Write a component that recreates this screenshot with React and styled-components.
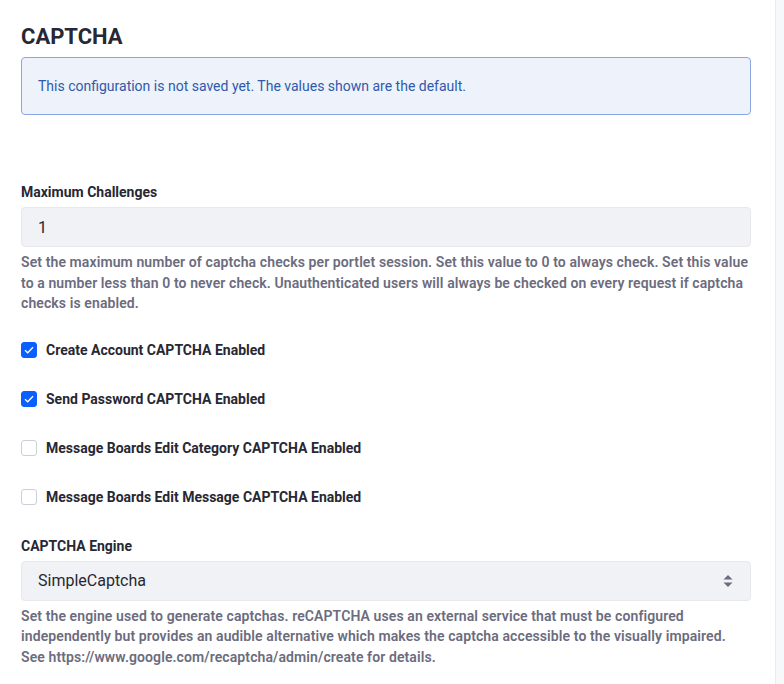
import React from "react";
import styled, { createGlobalStyle } from "styled-components";

const GlobalStyle = createGlobalStyle`
  body {
    margin: 0;
    background: #ffffff;
    font-family: Roboto, "Liberation Sans", sans-serif;
  }
  * {
    box-sizing: border-box;
  }
`;

const checkboxes = [
  { label: "Create Account CAPTCHA Enabled", checked: true },
  { label: "Send Password CAPTCHA Enabled", checked: true },
  { label: "Message Boards Edit Category CAPTCHA Enabled", checked: false },
  { label: "Message Boards Edit Message CAPTCHA Enabled", checked: false },
];

export default function App() {
  return (
    <>
      <GlobalStyle />
      <Page>
        <Main>
          <Title>CAPTCHA</Title>
          <Alert>This configuration is not saved yet. The values shown are the default.</Alert>

          <FormGroup style={{ marginTop: 67 }}>
            <Label>Maximum Challenges</Label>
            <Input>1</Input>
            <HelpText>
              Set the maximum number of captcha checks per portlet session. Set this value to 0 to
              always check. Set this value to a number less than 0 to never check. Unauthenticated
              users will always be checked on every request if captcha checks is enabled.
            </HelpText>
          </FormGroup>

          <CheckList>
            {checkboxes.map((item) => (
              <CheckRow key={item.label}>
                <CheckBox checked={item.checked}>
                  {item.checked && (
                    <svg width="10" height="8" viewBox="0 0 10 8">
                      <path d="M1 4.2 L3.7 6.8 L9 1.2" fill="none" stroke="#fff" strokeWidth="1.3" />
                    </svg>
                  )}
                </CheckBox>
                <CheckLabel>{item.label}</CheckLabel>
              </CheckRow>
            ))}
          </CheckList>

          <FormGroup style={{ marginTop: 28 }}>
            <Label>CAPTCHA Engine</Label>
            <Input>
              SimpleCaptcha
              <Arrows width="10" height="14" viewBox="0 0 10 14">
                <path d="M5 1 L9.5 5.5 L0.5 5.5 Z" fill="#6b6c7e" />
                <path d="M0.5 8.5 L9.5 8.5 L5 13 Z" fill="#6b6c7e" />
              </Arrows>
            </Input>
            <HelpText>
              Set the engine used to generate captchas. reCAPTCHA uses an external service that must
              be configured independently but provides an audible alternative which makes the
              captcha accessible to the visually impaired. See
              https://www.google.com/recaptcha/admin/create for details.
            </HelpText>
          </FormGroup>
        </Main>
        <Scrollbar />
      </Page>
    </>
  );
}

// Styled Components

const Page = styled.div`
  display: flex;
  min-height: 684px;
`;

const Main = styled.div`
  flex: 1;
  padding: 24px 24px 0 21px;
`;

const Scrollbar = styled.div`
  width: 9px;
  background: #f7f8f9;
  border-left: 1px solid #ececf0;
`;

const Title = styled.h2`
  margin: 0 0 7px;
  font-size: 22px;
  line-height: 26px;
  font-weight: 700;
  color: #272833;
`;

const Alert = styled.div`
  padding: 18px 16px 17px;
  font-size: 14px;
  line-height: 21px;
  color: #2e5aac;
  background: #eef2fa;
  border: 1px solid #89a7e0;
  border-radius: 4px;
`;

const FormGroup = styled.div`
  display: flex;
  flex-direction: column;
`;

const Label = styled.div`
  margin-bottom: 4px;
  font-size: 14px;
  line-height: 21px;
  font-weight: 700;
  color: #272833;
`;

const Input = styled.div`
  position: relative;
  height: 40px;
  display: flex;
  align-items: center;
  padding: 0 16px;
  font-size: 16px;
  color: #272833;
  background: #f1f2f5;
  border: 1px solid #e7e7ed;
  border-radius: 4px;
`;

const Arrows = styled.svg`
  position: absolute;
  right: 17px;
  top: 12px;
`;

const HelpText = styled.div`
  margin-top: 5px;
  font-size: 14px;
  line-height: 20.5px;
  font-weight: 600;
  letter-spacing: 0.1px;
  color: #6b6c7e;
`;

const CheckList = styled.div`
  display: flex;
  flex-direction: column;
  gap: 28px;
  margin-top: 26px;
`;

const CheckRow = styled.label`
  display: flex;
  align-items: center;
  gap: 9px;
  height: 21px;
`;

const CheckBox = styled.span`
  width: 16px;
  height: 16px;
  display: flex;
  align-items: center;
  justify-content: center;
  border-radius: 3px;
  background: ${(props) => (props.checked ? "#0b5fff" : "#ffffff")};
  border: 1px solid ${(props) => (props.checked ? "#0b5fff" : "#cdced9")};
`;

const CheckLabel = styled.span`
  font-size: 14px;
  line-height: 21px;
  font-weight: 700;
  color: #272833;
`;
